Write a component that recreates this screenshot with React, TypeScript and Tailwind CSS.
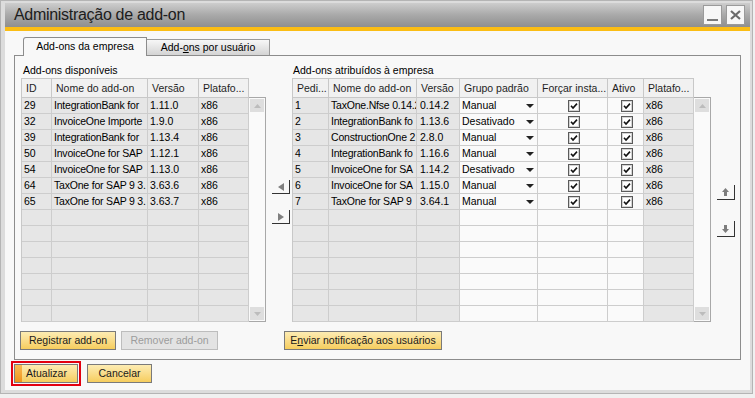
import type { ReactNode } from "react";

const LEFT_COLS = "grid-cols-[30px_96px_51px_50px]";
const RIGHT_COLS = "grid-cols-[36px_88px_43px_78px_70px_36px_50px]";

const head =
  "h-[19px] border-r border-b border-[#c8c8c8] bg-[#f1f1f1] pl-[4px] leading-[19px] whitespace-nowrap overflow-hidden text-[#1f1f1f]";
const cell =
  "h-[16px] border-r border-b border-[#cdcdcd] pl-[2px] leading-[15px] whitespace-nowrap overflow-hidden";
const grey = "bg-[#e6e6e6]";
const white = "bg-[#fafafa]";

// names are given as far as the narrow column shows them
const leftRows = [
  ["29", "IntegrationBank for", "1.11.0", "x86"],
  ["32", "InvoiceOne Importe", "1.9.0", "x86"],
  ["39", "IntegrationBank for", "1.13.4", "x86"],
  ["50", "InvoiceOne for SAP", "1.12.1", "x86"],
  ["54", "InvoiceOne for SAP", "1.13.0", "x86"],
  ["64", "TaxOne for SAP 9 3.", "3.63.6", "x86"],
  ["65", "TaxOne for SAP 9 3.", "3.63.7", "x86"],
];

const rightRows = [
  ["1", "TaxOne.Nfse 0.14.2", "0.14.2", "Manual"],
  ["2", "IntegrationBank fo", "1.13.6", "Desativado"],
  ["3", "ConstructionOne 2", "2.8.0", "Manual"],
  ["4", "IntegrationBank fo", "1.16.6", "Manual"],
  ["5", "InvoiceOne for SA", "1.14.2", "Desativado"],
  ["6", "InvoiceOne for SA", "1.15.0", "Manual"],
  ["7", "TaxOne for SAP 9", "3.64.1", "Manual"],
];

const ROWS = 14;

function CheckBox() {
  return (
    <svg width="12" height="12" viewBox="0 0 12 12">
      <rect x="0.5" y="0.5" width="11" height="11" fill="#fff" stroke="#5a5a5a" />
      <rect x="1.5" y="1.5" width="9" height="9" fill="none" stroke="#d4d4d4" />
      <path d="M3 5.8 L5 8 L9 3.6" fill="none" stroke="#111" strokeWidth="1.6" />
    </svg>
  );
}

function Caret() {
  return (
    <svg width="8" height="4" viewBox="0 0 8 4">
      <polygon points="0,0 8,0 4,4" fill="#222" />
    </svg>
  );
}

function ScrollBar() {
  return (
    <div className="mt-[19px] h-[225px] w-[17px] border-t border-r border-b border-[#a8a8a8] bg-[#fafafa] flex flex-col justify-between">
      <div className="mt-[1px] ml-[1px] h-[13px] w-[14px] bg-[#dedede] flex items-center justify-center">
        <svg width="7" height="4" viewBox="0 0 7 4">
          <polygon points="0,4 7,4 3.5,0" fill="#bcbcbc" />
        </svg>
      </div>
      <div className="mb-[1px] ml-[1px] h-[13px] w-[14px] bg-[#dedede] flex items-center justify-center">
        <svg width="7" height="4" viewBox="0 0 7 4">
          <polygon points="0,0 7,0 3.5,4" fill="#bcbcbc" />
        </svg>
      </div>
    </div>
  );
}

function ShadowBtn({ children, h }: { children: ReactNode; h: string }) {
  return (
    <div className={`w-[18px] ${h} border-r border-b border-[#333] flex items-center justify-center`}>
      {children}
    </div>
  );
}

function LeftTable() {
  return (
    <div className="flex flex-col w-[245px]">
      <div className="pl-[2px] h-[14px] leading-[14px]">Add-ons disponíveis</div>
      <div className="mt-[1px] flex items-start">
        <div className={`grid ${LEFT_COLS} border-l border-t border-[#c8c8c8]`}>
          <div className={head}>ID</div>
          <div className={head}>Nome do add-on</div>
          <div className={head}>Versão</div>
          <div className={head}>Platafo...</div>
          {Array.from({ length: ROWS }).map((_, i) => {
            const r = leftRows[i] ?? ["", "", "", ""];
            return r.map((v, j) => (
              <div key={`${i}-${j}`} className={`${cell} ${grey} ${j === 1 ? "tracking-[-0.2px]" : ""}`}>
                {v}
              </div>
            ));
          })}
        </div>
        <ScrollBar />
      </div>
    </div>
  );
}

function RightTable() {
  return (
    <div className="flex flex-col w-[419px]">
      <div className="pl-[1px] h-[14px] leading-[14px]">Add-ons atribuídos à empresa</div>
      <div className="mt-[1px] flex items-start">
        <div className={`grid ${RIGHT_COLS} border-l border-t border-[#c8c8c8]`}>
          <div className={head}>Pedi...</div>
          <div className={head}>Nome do add-on</div>
          <div className={head}>Versão</div>
          <div className={head}>Grupo padrão</div>
          <div className={head}>Forçar insta...</div>
          <div className={head}>Ativo</div>
          <div className={head}>Platafo...</div>
          {Array.from({ length: ROWS }).map((_, i) => {
            const r = rightRows[i];
            return [
              <div key={`${i}-a`} className={`${cell} ${grey}`}>{r?.[0]}</div>,
              <div key={`${i}-b`} className={`${cell} ${grey} tracking-[-0.2px]`}>{r?.[1]}</div>,
              <div key={`${i}-c`} className={`${cell} ${grey} pl-[3px]`}>{r?.[2]}</div>,
              <div key={`${i}-d`} className={`${cell} ${white} flex items-center justify-between pr-[3px]`}>
                {r && (
                  <>
                    <span>{r[3]}</span>
                    <Caret />
                  </>
                )}
              </div>,
              <div key={`${i}-e`} className={`${cell} ${white} flex items-center justify-center`}>
                {r && <CheckBox />}
              </div>,
              <div key={`${i}-f`} className={`${cell} ${white} flex items-center justify-center`}>
                {r && <CheckBox />}
              </div>,
              <div key={`${i}-g`} className={`${cell} ${grey}`}>{r ? "x86" : ""}</div>,
            ];
          })}
        </div>
        <ScrollBar />
      </div>
    </div>
  );
}

const yellowBtn =
  "h-[19px] border border-[#7a7a7a] bg-linear-to-b from-[#fdecb2] to-[#f6cd5c] flex items-center justify-center text-[#1a1a1a] whitespace-nowrap";

export default function App() {
  return (
    <div className="w-[755px] h-[398px] bg-[#f0f0f0] font-['Liberation_Sans',Arial,sans-serif] text-[10.5px] text-black">
      <div className="w-[753px] h-[394px] border border-[#b4b4b4] bg-[#dcdcdc] pl-[4px] pr-[2px] pt-[2px] pb-[3px] flex flex-col">
        {/* title bar */}
        <div className="h-[24px] bg-linear-to-b from-[#cdcdcd] via-[#a9a9a9] to-[#8f8f8f] flex items-center pl-[9px] pr-[5px]">
          <span className="text-[16px] tracking-[-0.3px] text-[#1c1c1c] leading-none">Administração de add-on</span>
          <div className="ml-auto flex gap-[4px]">
            <div className="w-[19px] h-[20px] border border-[#9a9a9a] bg-[#f7f7f7] flex items-end justify-center pb-[3px]">
              <div className="w-[11px] h-[2px] bg-[#7a7a7a]" />
            </div>
            <div className="w-[19px] h-[20px] border border-[#9a9a9a] bg-[#f7f7f7] flex items-center justify-center">
              <svg width="11" height="10" viewBox="0 0 11 10">
                <path d="M1 1 L10 9 M10 1 L1 9" stroke="#6a6a6a" strokeWidth="2.2" />
              </svg>
            </div>
          </div>
        </div>
        <div className="h-[4px] bg-[#fbbd14]" />

        {/* body */}
        <div className="flex-1 bg-[#f8f8f8] pt-[6px] px-[9px] flex flex-col">
          <div className="h-[18px] flex items-start pl-[9px]">
            <div className="relative z-10 w-[124px] h-[19px] border border-b-0 border-[#8c8c8c] rounded-tl-[3px] bg-[#f8f8f8] flex items-center justify-center">
              Add-ons da empresa
            </div>
            <div className="mt-[2px] w-[123px] h-[16px] border border-l-0 border-b-0 border-[#9a9a9a] bg-linear-to-b from-[#f7f7f7] to-[#d4d4d4] flex items-center justify-center">
              <span>
                Add-<span className="underline">o</span>ns por usuário
              </span>
            </div>
          </div>

          <div className="h-[305px] border border-[#8c8c8c] flex flex-col pt-[7px]">
            <div className="flex items-start pl-[6px]">
              <LeftTable />
              <div className="ml-[6px] flex flex-col">
                <div className="mt-[117px]">
                  <ShadowBtn h="h-[14px]">
                    <svg width="6" height="8" viewBox="0 0 6 8">
                      <polygon points="6,0 6,8 0,4" fill="#808080" />
                    </svg>
                  </ShadowBtn>
                </div>
                <div className="mt-[16px]">
                  <ShadowBtn h="h-[14px]">
                    <svg width="6" height="8" viewBox="0 0 6 8">
                      <polygon points="0,0 0,8 6,4" fill="#808080" />
                    </svg>
                  </ShadowBtn>
                </div>
              </div>
              <div className="ml-[2px]">
                <RightTable />
              </div>
              <div className="ml-[6px] flex flex-col">
                <div className="mt-[122px]">
                  <ShadowBtn h="h-[15px]">
                    <svg width="7" height="8" viewBox="0 0 7 8">
                      <polygon points="3.5,0 7,4 5,4 5,8 2,8 2,4 0,4" fill="#7d7d7d" />
                    </svg>
                  </ShadowBtn>
                </div>
                <div className="mt-[21px]">
                  <ShadowBtn h="h-[16px]">
                    <svg width="7" height="8" viewBox="0 0 7 8">
                      <polygon points="2,0 5,0 5,4 7,4 3.5,8 0,4 2,4" fill="#7d7d7d" />
                    </svg>
                  </ShadowBtn>
                </div>
              </div>
            </div>

            <div className="mt-[9px] pl-[5px] flex items-center">
              <div className={`${yellowBtn} w-[96px]`}>Registrar add-on</div>
              <div className="ml-[5px] w-[97px] h-[19px] border border-[#bdbdbd] bg-[#e3e3e3] flex items-center justify-center text-[#9c9c9c]">
                Remover add-on
              </div>
              <div className={`${yellowBtn} ml-[66px] w-[158px]`}>
                <span>
                  E<span className="underline">n</span>viar notificação aos usuários
                </span>
              </div>
            </div>
          </div>

          <div className="mt-[1px] -ml-[3px] flex items-center">
            <div className="border-2 border-[#e3000f] p-[1px]">
              <div className="w-[64px] h-[19px] border border-[#7a7a7a] flex">
                <div className="w-[7px] bg-linear-to-b from-[#f9bb50] to-[#ee9418]" />
                <div className="flex-1 bg-linear-to-b from-[#fdecb2] to-[#f6cd5c] flex items-center justify-center pr-[6px] text-[#1a1a1a]">
                  Atualizar
                </div>
              </div>
            </div>
            <div className={`${yellowBtn} ml-[6px] w-[65px]`}>Cancelar</div>
          </div>
        </div>
      </div>
    </div>
  );
}
